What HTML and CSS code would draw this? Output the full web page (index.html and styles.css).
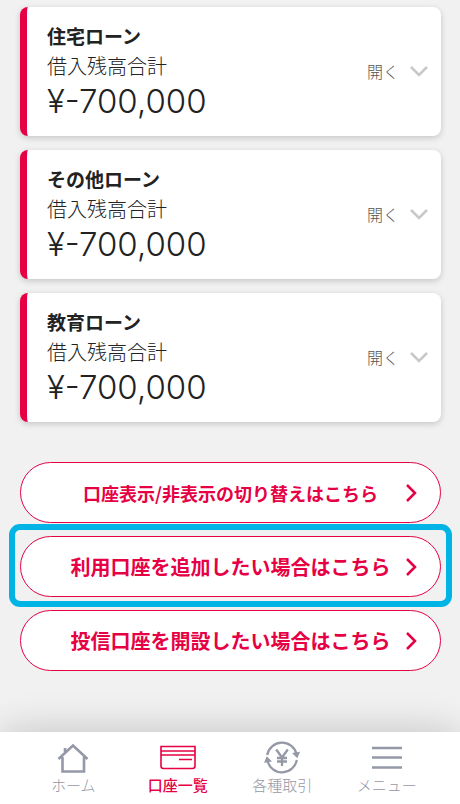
FILE: index.html
```html
<!DOCTYPE html>
<html lang="ja">
<head>
    <meta charset="UTF-8">
    <meta name="viewport" content="width=device-width, initial-scale=1.0">
    <title>口座一覧</title>
    <link rel="stylesheet" href="styles.css">
</head>
<body>
    <main>
        <section class="loans">
            <article class="card">
                <div class="card-body">
                    <h2>住宅ローン</h2>
                    <p class="label">借入残高合計</p>
                    <p class="amount">¥-700,000</p>
                </div>
                <button type="button" class="open">
                    開く
                    <svg width="18" height="12" viewBox="0 0 18 12"><path d="M1 2 9 10 17 2"/></svg>
                </button>
            </article>
            <article class="card">
                <div class="card-body">
                    <h2>その他ローン</h2>
                    <p class="label">借入残高合計</p>
                    <p class="amount">¥-700,000</p>
                </div>
                <button type="button" class="open">
                    開く
                    <svg width="18" height="12" viewBox="0 0 18 12"><path d="M1 2 9 10 17 2"/></svg>
                </button>
            </article>
            <article class="card">
                <div class="card-body">
                    <h2>教育ローン</h2>
                    <p class="label">借入残高合計</p>
                    <p class="amount">¥-700,000</p>
                </div>
                <button type="button" class="open">
                    開く
                    <svg width="18" height="12" viewBox="0 0 18 12"><path d="M1 2 9 10 17 2"/></svg>
                </button>
            </article>
        </section>

        <section class="links">
            <a href="#display" class="pill pill-small">
                <span>口座表示/非表示の切り替えはこちら</span>
                <svg width="12" height="18" viewBox="0 0 12 18"><path d="M2 1 10 9 2 17"/></svg>
            </a>
            <a href="#add" class="pill highlight">
                <span>利用口座を追加したい場合はこちら</span>
                <svg width="12" height="18" viewBox="0 0 12 18"><path d="M2 1 10 9 2 17"/></svg>
            </a>
            <a href="#fund" class="pill">
                <span>投信口座を開設したい場合はこちら</span>
                <svg width="12" height="18" viewBox="0 0 12 18"><path d="M2 1 10 9 2 17"/></svg>
            </a>
        </section>
    </main>

    <nav class="tabbar">
        <a href="#home">
            <svg width="36" height="34" viewBox="0 0 36 34">
                <path d="M3.5 18 18 4.500 32.500 18M7.500 16v14.500h21.500V16M10 11V7" stroke-width="2.600"/>
            </svg>
            ホーム
        </a>
        <a href="#accounts" class="active">
            <svg width="36" height="34" viewBox="0 0 36 34">
                <path d="M1 5.500h34v19.500a2.500 2.500 0 0 1-2.500 2.500h-29A2.500 2.500 0 0 1 1 25zM1 10h34M1 14h34M19 18.500h13" stroke-width="1.600"/>
            </svg>
            口座一覧
        </a>
        <a href="#trade">
            <svg width="36" height="34" viewBox="0 0 36 34">
                <path d="M3.200 14A15 15 0 0 1 32.500 13M32.800 19A15 15 0 0 1 3.500 20" stroke-width="2.300"/>
                <path class="solid" d="M28 12 36 10.800 33.300 17.300zM0 21.700 2.700 15.200 8 20.500z"/>
                <path d="M12.200 8.500 18 16.500 23.800 8.500M18 16.500V25M13 17h10M13 20.500h10" stroke-width="2.300"/>
            </svg>
            各種取引
        </a>
        <a href="#menu">
            <svg width="36" height="34" viewBox="0 0 36 34">
                <path d="M3 7h30M3 16.500h30M3 26.500h30" stroke-width="2.600"/>
            </svg>
            メニュー
        </a>
    </nav>
</body>
</html>
```

FILE: styles.css
```css
* {
    box-sizing: border-box;
}

body {
    margin: 0;
    min-height: 100vh;
    display: flex;
    flex-direction: column;
    background: #f1f1f1;
    color: #222;
    font-family: "Noto Sans CJK JP", sans-serif;
}

main {
    flex: 1;
    padding: 7px 19px 32px 20px;
}

svg {
    display: block;
    fill: none;
    stroke: currentColor;
}

.loans,
.links {
    display: flex;
    flex-direction: column;
}

.loans {
    gap: 14px;
}

.card {
    display: flex;
    align-items: center;
    justify-content: space-between;
    padding: 15px 13px 16px 20px;
    background: #fff;
    border-left: 7px solid #e60044;
    border-radius: 8px;
    box-shadow: 0 2px 6px rgba(0, 0, 0, 0.18);
}

.card h2,
.card p {
    margin: 0;
}

.card h2 {
    font-size: 19px;
    font-weight: 700;
    line-height: 28px;
}

.label {
    font-size: 20px;
    font-weight: 300;
    line-height: 32px;
}

.amount {
    font-family: Inter, "Liberation Sans", sans-serif;
    font-size: 33px;
    font-weight: 300;
    line-height: 38px;
}

.open {
    display: flex;
    align-items: center;
    gap: 11px;
    padding: 0;
    border: 0;
    background: none;
    color: #555;
    font-family: inherit;
    font-size: 16px;
    font-weight: 300;
    line-height: 24px;
}

.open svg {
    stroke: #c8c8c8;
    stroke-width: 2.5;
}

.links {
    gap: 13px;
    margin-top: 40px;
}

.pill {
    display: grid;
    grid-template-columns: 1fr auto 1fr;
    align-items: center;
    position: relative;
    height: 61px;
    padding: 0 23px;
    background: #fff;
    border: 1px solid #e60044;
    border-radius: 31px;
    color: #e60044;
    font-size: 20px;
    font-weight: 700;
    line-height: 28px;
    text-decoration: none;
    white-space: nowrap;
}

.pill-small {
    font-size: 18px;
}

.pill span {
    grid-column: 2;
}

.pill svg {
    justify-self: end;
    stroke-width: 2.5;
}

/* callout frame around the recommended link */
.highlight::after {
    content: "";
    position: absolute;
    inset: -13px -12px -11px;
    border: 6px solid #00b4e6;
    border-radius: 11px;
    pointer-events: none;
}

.tabbar {
    position: sticky;
    bottom: 0;
    display: grid;
    grid-template-columns: repeat(4, 1fr);
    height: 72px;
    padding: 9px 21px 0;
    background: #fff;
    box-shadow: 0 0 40px -2px rgba(0, 0, 0, 0.22);
}

.tabbar a {
    display: flex;
    flex-direction: column;
    align-items: center;
    color: #9598a6;
    font-size: 15px;
    font-weight: 300;
    line-height: 20px;
    text-decoration: none;
    white-space: nowrap;
}

.tabbar .active {
    color: #e60044;
    font-weight: 500;
}

.tabbar .solid {
    fill: currentColor;
    stroke: none;
}
```
